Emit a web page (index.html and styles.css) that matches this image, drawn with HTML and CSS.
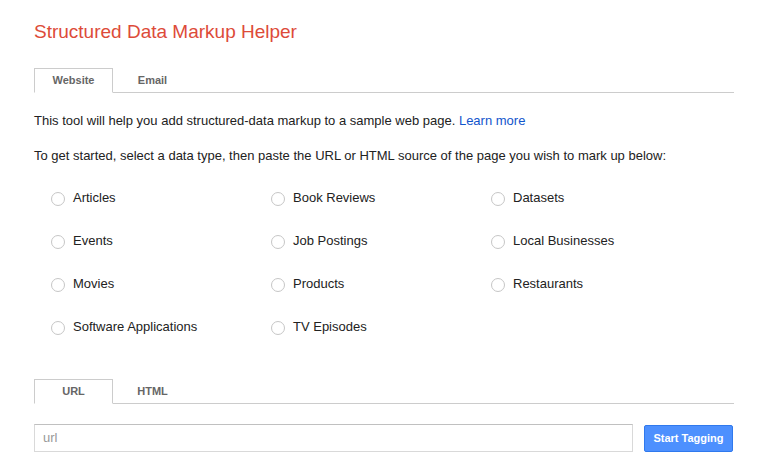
FILE: index.html
```html
<!DOCTYPE html>
<html>
<head>
<meta charset="utf-8">
<link rel="stylesheet" href="styles.css">
</head>
<body>
<div class="page">
  <h1 class="title">Structured Data Markup Helper</h1>
  <div class="tabs tabs-top">
    <div class="tab active">Website</div>
    <div class="tab">Email</div>
  </div>
  <p class="intro">This tool will help you add structured-data markup to a sample web page. <a href="#" class="link">Learn more</a></p>
  <p class="intro second">To get started, select a data type, then paste the URL or HTML source of the page you wish to mark up below:</p>
  <div class="types">
    <label class="opt"><span class="radio"></span>Articles</label>
    <label class="opt"><span class="radio"></span>Book Reviews</label>
    <label class="opt"><span class="radio"></span>Datasets</label>
    <label class="opt"><span class="radio"></span>Events</label>
    <label class="opt"><span class="radio"></span>Job Postings</label>
    <label class="opt"><span class="radio"></span>Local Businesses</label>
    <label class="opt"><span class="radio"></span>Movies</label>
    <label class="opt"><span class="radio"></span>Products</label>
    <label class="opt"><span class="radio"></span>Restaurants</label>
    <label class="opt"><span class="radio"></span>Software Applications</label>
    <label class="opt"><span class="radio"></span>TV Episodes</label>
  </div>
  <div class="tabs tabs-bottom">
    <div class="tab active">URL</div>
    <div class="tab">HTML</div>
  </div>
  <div class="url-row">
    <div class="input">url</div>
    <button class="btn">Start Tagging</button>
  </div>
</div>
</body>
</html>
```

FILE: styles.css
```css
html, body {
  margin: 0;
  padding: 0;
  background: #fff;
}
body {
  font-family: "Liberation Sans", Arial, sans-serif;
  color: #222;
  font-size: 13px;
}
.page {
  width: 700px;
  padding: 0 0 0 34px;
}
.title {
  margin: 0;
  padding-top: 20px;
  height: 68px;
  box-sizing: border-box;
  font-size: 19px;
  font-weight: normal;
  color: #dd4b39;
  line-height: 24px;
}
.tabs {
  display: flex;
  border-bottom: 1px solid #ccc;
  height: 24px;
}
.tab {
  width: 79px;
  box-sizing: border-box;
  text-align: center;
  font-size: 11px;
  font-weight: bold;
  color: #666;
  line-height: 24px;
  margin-bottom: -1px;
  height: 25px;
}
.tab.active {
  border: 1px solid #ccc;
  border-bottom: 1px solid #fff;
  background: #fff;
  line-height: 22px;
}
.intro {
  margin: 0;
  line-height: 16px;
  padding-top: 20px;
}
.intro.second {
  padding-top: 19px;
}
.link {
  color: #1155cc;
  text-decoration: none;
}
.types {
  display: grid;
  grid-template-columns: 220px 220px 220px;
  grid-auto-rows: 43px;
  padding: 26px 0 0 17px;
  height: 215px;
  box-sizing: border-box;
}
.opt {
  display: flex;
  align-items: center;
  height: 16px;
  line-height: 16px;
  color: #222;
}
.radio {
  width: 14px;
  height: 14px;
  box-sizing: border-box;
  border: 1px solid #c6c6c6;
  border-radius: 50%;
  margin-right: 8px;
  margin-top: 2px;
}
.url-row {
  display: flex;
  align-items: center;
  margin-top: 20px;
  gap: 11px;
}
.input {
  width: 599px;
  height: 28px;
  box-sizing: border-box;
  border: 1px solid #d9d9d9;
  border-top-color: #c0c0c0;
  padding: 0 8px;
  line-height: 26px;
  color: #999;
  font-size: 13px;
}
.btn {
  width: 89px;
  height: 27px;
  border: 1px solid #3079ed;
  background: #4d90fe;
  color: #fff;
  font-family: "Liberation Sans", Arial, sans-serif;
  font-size: 11px;
  font-weight: bold;
  border-radius: 2px;
  padding: 0;
}
```
